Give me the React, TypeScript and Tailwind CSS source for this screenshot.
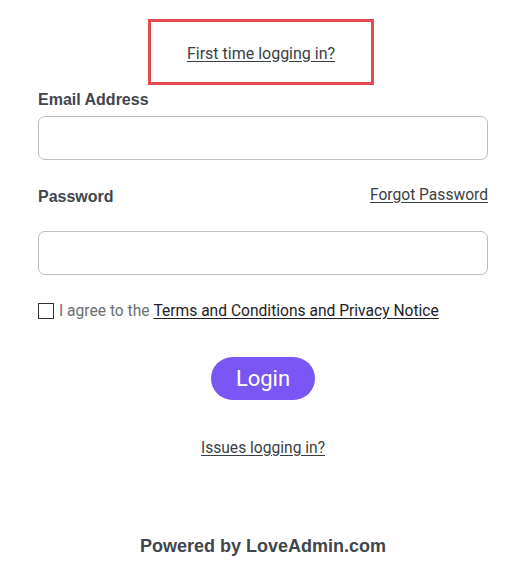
import React, { useState } from 'react';

const App: React.FC = () => {
  const [agreed, setAgreed] = useState(false);

  return (
    <div className="min-h-screen bg-white pl-[38px] pr-[42px] pt-[19px] font-['Roboto',sans-serif]">
      {/* First time link box */}
      <div className="flex">
        <div className="ml-[110px] w-[226px] h-[66px] border-[3px] border-[#e04b4b] flex items-center justify-center pt-[3px]">
          <a href="#" className="text-[16px] text-[#3a3f45] underline underline-offset-2">First time logging in?</a>
        </div>
      </div>

      <form className="mt-[5px]" onSubmit={(e) => e.preventDefault()}>
        <label className="block text-[16px] font-bold text-[#3f464d] font-['Liberation_Sans',Arial,sans-serif] leading-[20px] mb-[6px]">
          Email Address
        </label>
        <input type="email" className="w-full h-[44px] rounded-[7px] border border-[#bdbdbd] px-3 outline-none" />

        <div className="flex items-center justify-between mt-[27px] mb-[24px] leading-[20px]">
          <label className="text-[16px] font-bold text-[#3f464d] font-['Liberation_Sans',Arial,sans-serif]">Password</label>
          <a href="#" className="text-[15.6px] text-[#3a3f45] underline underline-offset-2 -mt-[4px]">Forgot Password</a>
        </div>
        <input type="password" className="w-full h-[44px] rounded-[7px] border border-[#bdbdbd] px-3 outline-none" />

        <label className="flex items-center mt-[26px] text-[15.6px] text-[#6b6f73] leading-[20px]">
          <input
            type="checkbox"
            checked={agreed}
            onChange={() => setAgreed(!agreed)}
            className="appearance-none w-[16px] h-[16px] border-[1.5px] border-[#333] mr-[5px] shrink-0"
          />
          I agree to the&nbsp;
          <a href="#" className="text-[#1f2226] underline underline-offset-2">Terms and Conditions and Privacy Notice</a>
        </label>

        <div className="flex justify-center mt-[36px]">
          <button type="submit" className="w-[104px] h-[43px] rounded-full bg-[#7a56f5] text-white text-[22px]">
            Login
          </button>
        </div>

        <div className="flex justify-center mt-[37px]">
          <a href="#" className="text-[15.6px] text-[#3a3f45] underline underline-offset-2">Issues logging in?</a>
        </div>
      </form>

      <div className="flex justify-center mt-[73px]">
        <span className="text-[18px] font-bold text-[#3f464d] font-['Liberation_Sans',Arial,sans-serif]">Powered by LoveAdmin.com</span>
      </div>
    </div>
  );
};

export default App;
